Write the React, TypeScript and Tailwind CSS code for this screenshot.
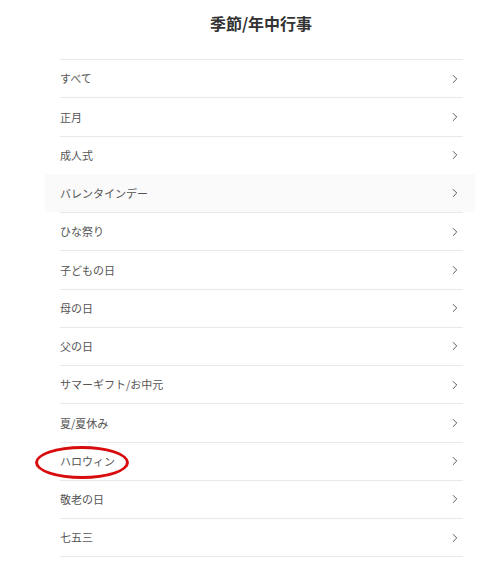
import { ChevronRight } from "lucide-react";

const items = [
  "すべて",
  "正月",
  "成人式",
  "バレンタインデー",
  "ひな祭り",
  "子どもの日",
  "母の日",
  "父の日",
  "サマーギフト/お中元",
  "夏/夏休み",
  "ハロウィン",
  "敬老の日",
  "七五三",
];

const App = () => {
  return (
    <div
      className="w-[494px] h-[576px] bg-white overflow-hidden"
      style={{ fontFamily: '"Noto Sans CJK JP", "Noto Sans", sans-serif' }}
    >
      <h1 className="h-[59px] pl-[28px] flex items-center justify-center text-[16px] font-bold text-[#333] pb-[14px]">
        季節/年中行事
      </h1>

      <ul className="ml-[60px] w-[403px] border-t border-[#e8e8e8]">
        {items.map((label, i) => (
          <li key={label} className="relative h-[38.25px] border-b border-[#e8e8e8]">
            {i === 3 && <div className="absolute -left-[15px] -right-[12px] -top-px bottom-0 bg-[#fafafa]" />}
            <div className="relative flex items-center justify-between h-full pr-[1px]">
              <span className="text-[11px] font-normal text-[#555]">{label}</span>
              <ChevronRight className="w-[14px] h-[14px] text-[#444]" strokeWidth={1.5} />
            </div>
            {label === "ハロウィン" && (
              <div className="absolute -left-[25px] top-[3px] w-[94px] h-[33px] rounded-[50%] border-[3px] border-[#d80c0c]" />
            )}
          </li>
        ))}
      </ul>
    </div>
  );
};

export default App;
